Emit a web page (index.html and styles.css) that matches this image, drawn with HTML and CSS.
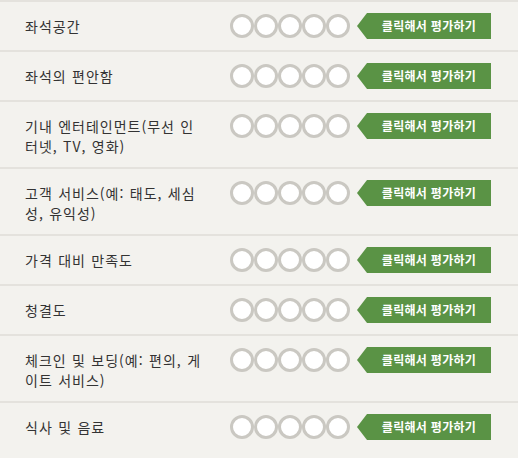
FILE: index.html
```html
<!DOCTYPE html>
<html lang="ko">
<head>
<meta charset="utf-8">
<title>평가</title>
<link rel="stylesheet" href="styles.css">
</head>
<body>
<ul class="list">
  <li class="row"><div class="label">좌석공간</div><div class="stars"><span></span><span></span><span></span><span></span><span></span></div><a class="rate">클릭해서 평가하기</a></li>
  <li class="row"><div class="label">좌석의 편안함</div><div class="stars"><span></span><span></span><span></span><span></span><span></span></div><a class="rate">클릭해서 평가하기</a></li>
  <li class="row"><div class="label">기내 엔터테인먼트(무선 인터넷, TV, 영화)</div><div class="stars"><span></span><span></span><span></span><span></span><span></span></div><a class="rate">클릭해서 평가하기</a></li>
  <li class="row"><div class="label">고객 서비스(예: 태도, 세심성, 유익성)</div><div class="stars"><span></span><span></span><span></span><span></span><span></span></div><a class="rate">클릭해서 평가하기</a></li>
  <li class="row"><div class="label">가격 대비 만족도</div><div class="stars"><span></span><span></span><span></span><span></span><span></span></div><a class="rate">클릭해서 평가하기</a></li>
  <li class="row"><div class="label">청결도</div><div class="stars"><span></span><span></span><span></span><span></span><span></span></div><a class="rate">클릭해서 평가하기</a></li>
  <li class="row"><div class="label">체크인 및 보딩(예: 편의, 게이트 서비스)</div><div class="stars"><span></span><span></span><span></span><span></span><span></span></div><a class="rate">클릭해서 평가하기</a></li>
  <li class="row"><div class="label">식사 및 음료</div><div class="stars"><span></span><span></span><span></span><span></span><span></span></div><a class="rate">클릭해서 평가하기</a></li>
</ul>
</body>
</html>
```
FILE: styles.css
```css
html, body {
  margin: 0;
  padding: 0;
  background: #f3f2ee;
}
body {
  font-family: "Noto Sans CJK KR", "Noto Sans", sans-serif;
  color: #333333;
}
.list {
  list-style: none;
  margin: 0;
  padding: 0;
}
.row {
  display: flex;
  align-items: flex-start;
  border-top: 2px solid #e4e2dd;
  padding: 11px 0 11px 25px;
}
.label {
  width: 180px;
  font-size: 14px;
  line-height: 20px;
  letter-spacing: 1px;
  word-spacing: 0.5px;
  margin-top: 3px;
  margin-right: 25px;
}
.stars {
  display: flex;
  margin-top: 1px;
}
.stars span {
  width: 24px;
  height: 24px;
  box-sizing: border-box;
  border: 3px solid #cac8c2;
  border-radius: 50%;
  background: #ffffff;
}
.rate {
  margin-left: 7px;
  width: 134px;
  height: 26px;
  box-sizing: border-box;
  padding-left: 10px;
  background: #5a9345;
  clip-path: polygon(10px 0, 100% 0, 100% 100%, 10px 100%, 0 50%);
  color: #ffffff;
  font-size: 12px;
  font-weight: bold;
  line-height: 26px;
  text-align: center;
  letter-spacing: 0.3px;
}
```
